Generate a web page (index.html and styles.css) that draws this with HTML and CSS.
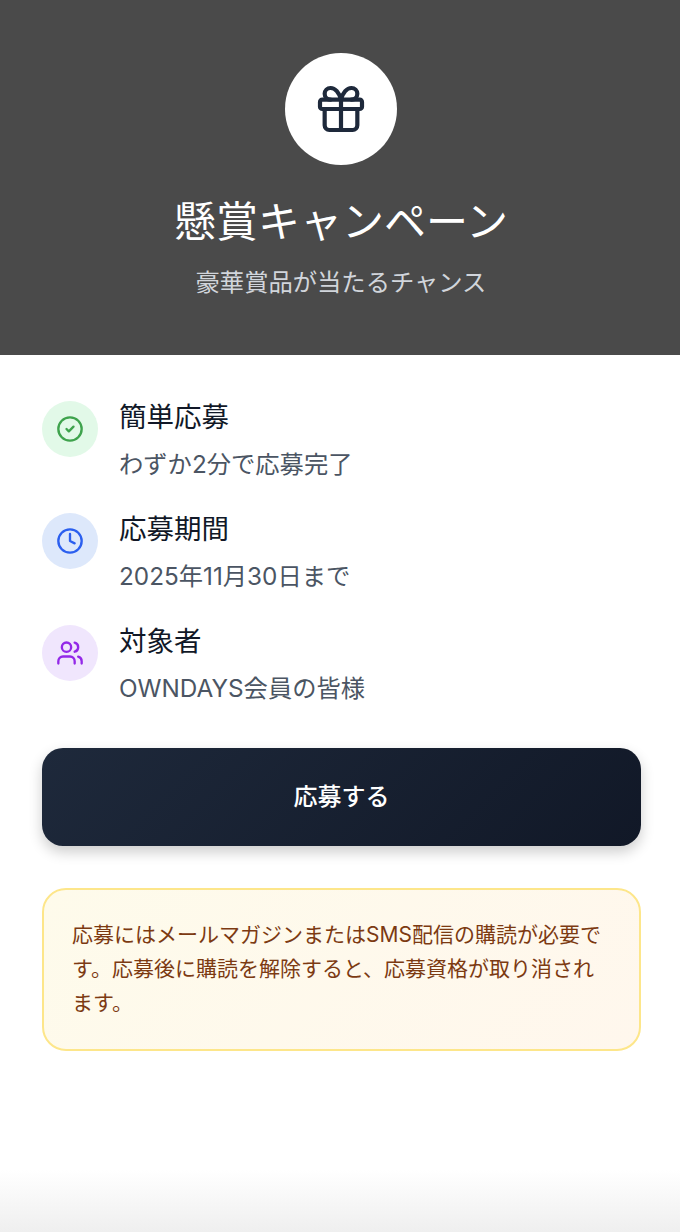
FILE: index.html
```html
<!DOCTYPE html>
<html lang="ja">
<head>
    <meta charset="UTF-8">
    <meta name="viewport" content="width=device-width, initial-scale=1.0">
    <title>懸賞キャンペーン</title>
    <link rel="stylesheet" href="styles.css">
</head>
<body>
    <!-- ヘッダー -->
    <div class="hero">
        <div class="hero-icon">
            <svg width="56" height="56" viewBox="0 0 24 24" fill="none" stroke="currentColor" stroke-width="1.8" stroke-linecap="round" stroke-linejoin="round">
                <rect x="3" y="8" width="18" height="4" rx="1"/>
                <path d="M12 8v13"/>
                <path d="M19 12v7a2 2 0 0 1-2 2H7a2 2 0 0 1-2-2v-7"/>
                <path d="M7.5 8a2.5 2.5 0 0 1 0-5A4.8 8 0 0 1 12 8a4.8 8 0 0 1 4.5-5 2.5 2.5 0 0 1 0 5"/>
            </svg>
        </div>
        <h1>懸賞キャンペーン</h1>
        <p>豪華賞品が当たるチャンス</p>
    </div>

    <div class="content">
        <!-- 特徴リスト -->
        <div class="features">
            <div class="feature">
                <div class="feature-icon green">
                    <svg width="28" height="28" viewBox="0 0 24 24" fill="none" stroke="currentColor" stroke-width="2" stroke-linecap="round" stroke-linejoin="round">
                        <circle cx="12" cy="12" r="10"/>
                        <path d="m9 12 2 2 4-4"/>
                    </svg>
                </div>
                <div>
                    <div class="feature-title">簡単応募</div>
                    <div class="feature-text">わずか2分で応募完了</div>
                </div>
            </div>
            <div class="feature">
                <div class="feature-icon blue">
                    <svg width="28" height="28" viewBox="0 0 24 24" fill="none" stroke="currentColor" stroke-width="2" stroke-linecap="round" stroke-linejoin="round">
                        <circle cx="12" cy="12" r="10"/>
                        <path d="M12 6v6l4 2"/>
                    </svg>
                </div>
                <div>
                    <div class="feature-title">応募期間</div>
                    <div class="feature-text">2025年11月30日まで</div>
                </div>
            </div>
            <div class="feature">
                <div class="feature-icon purple">
                    <svg width="28" height="28" viewBox="0 0 24 24" fill="none" stroke="currentColor" stroke-width="2" stroke-linecap="round" stroke-linejoin="round">
                        <path d="M16 21v-2a4 4 0 0 0-4-4H6a4 4 0 0 0-4 4v2"/>
                        <circle cx="9" cy="7" r="4"/>
                        <path d="M22 21v-2a4 4 0 0 0-3-3.87"/>
                        <path d="M16 3.13a4 4 0 0 1 0 7.75"/>
                    </svg>
                </div>
                <div>
                    <div class="feature-title">対象者</div>
                    <div class="feature-text">OWNDAYS会員の皆様</div>
                </div>
            </div>
        </div>

        <button class="apply">応募する</button>

        <!-- 注意事項 -->
        <div class="notice">応募にはメールマガジンまたはSMS配信の購読が必要です。応募後に購読を解除すると、応募資格が取り消されます。</div>
    </div>
</body>
</html>
```

FILE: styles.css
```css
html, body {
    height: 100%;
}
body {
    margin: 0;
    font-family: Inter, "Noto Sans CJK JP", sans-serif;
    background: linear-gradient(to bottom, #fff calc(100% - 62px), #efefef);
}
.hero {
    background-color: #4a4a4a;
    height: 355px;
    box-sizing: border-box;
    padding: 53px 0 0 2px;
    text-align: center;
}
.hero-icon {
    width: 112px;
    height: 112px;
    margin: 0 auto;
    border-radius: 50%;
    background-color: #fff;
    color: #1e293b;
    display: flex;
    align-items: center;
    justify-content: center;
}
.hero h1 {
    margin: 28px 0 0;
    font-size: 42px;
    line-height: 58px;
    font-weight: 400;
    color: #fff;
}
.hero p {
    margin: 13px 0 0;
    font-size: 24.3px;
    line-height: 36px;
    color: #d1d5db;
}
.content {
    padding: 46px 39px 0 42px;
}
.features {
    display: flex;
    flex-direction: column;
    gap: 30px;
}
.feature {
    display: flex;
    gap: 21px;
}
.feature-icon {
    width: 56px;
    height: 56px;
    border-radius: 50%;
    display: flex;
    align-items: center;
    justify-content: center;
    flex-shrink: 0;
}
.green {
    background-color: #e2f9e8;
    color: #3fa34d;
}
.blue {
    background-color: #dde8fb;
    color: #2b5fef;
}
.purple {
    background-color: #f0e6fd;
    color: #9328e8;
}
.feature-title {
    font-size: 27.5px;
    line-height: 32px;
    color: #111827;
}
.feature-text {
    margin-top: 12px;
    font-size: 24.3px;
    line-height: 38px;
    color: #4b5563;
}
.apply {
    display: block;
    width: 100%;
    height: 98px;
    margin-top: 41px;
    padding: 0 0 6px;
    border: none;
    border-radius: 21px;
    background: linear-gradient(135deg, #1e293b, #111827);
    box-shadow: 0 6px 14px rgba(0, 0, 0, 0.2);
    color: #fff;
    font-family: inherit;
    font-size: 24px;
    font-weight: 500;
}
.notice {
    margin-top: 42px;
    padding: 28px 28px 29px;
    border: 2px solid #fde68a;
    border-radius: 24px;
    background: linear-gradient(135deg, #fefbeb, #fff7ed);
    color: #7c3a12;
    font-size: 21px;
    line-height: 34px;
}
```
